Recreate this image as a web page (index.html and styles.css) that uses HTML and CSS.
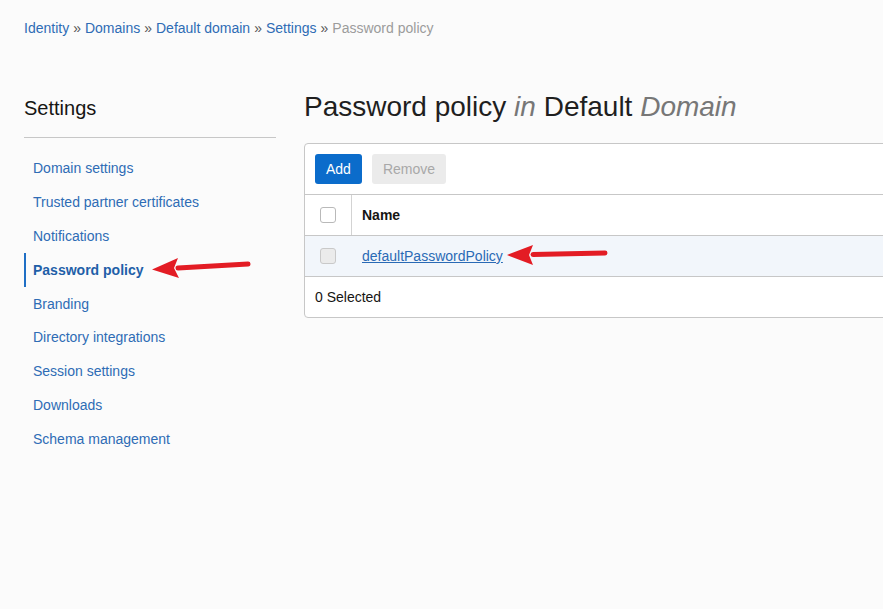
FILE: index.html
```html
<!DOCTYPE html>
<html>
<head>
<meta charset="utf-8">
<link rel="stylesheet" href="styles.css">
</head>
<body>
<div class="page">
  <nav class="crumbs">
    <a href="#">Identity</a><span class="sep">»</span><a href="#">Domains</a><span class="sep">»</span><a href="#">Default domain</a><span class="sep">»</span><a href="#">Settings</a><span class="sep">»</span><span class="current">Password policy</span>
  </nav>
  <div class="layout">
    <aside class="sidebar">
      <h2 class="side-title">Settings</h2>
      <ul class="side-nav">
        <li><a href="#">Domain settings</a></li>
        <li><a href="#">Trusted partner certificates</a></li>
        <li><a href="#">Notifications</a></li>
        <li class="active"><a href="#">Password policy</a></li>
        <li><a href="#">Branding</a></li>
        <li><a href="#">Directory integrations</a></li>
        <li><a href="#">Session settings</a></li>
        <li><a href="#">Downloads</a></li>
        <li><a href="#">Schema management</a></li>
      </ul>
    </aside>
    <main class="main">
      <h1 class="title">Password policy <em>in</em> Default <em>Domain</em></h1>
      <div class="card">
        <div class="toolbar">
          <button class="btn btn-primary">Add</button>
          <button class="btn btn-disabled">Remove</button>
        </div>
        <div class="row head">
          <div class="cell check"><span class="box"></span></div>
          <div class="cell name">Name</div>
        </div>
        <div class="row data">
          <div class="cell check"><span class="box dis"></span></div>
          <div class="cell name"><a href="#">defaultPasswordPolicy</a></div>
        </div>
        <div class="foot">0 Selected</div>
      </div>
    </main>
  </div>
  <svg class="arrow arrow-nav" width="110" height="24" viewBox="0 0 110 24">
    <path d="M100 10 L30 14" stroke="#e31c24" stroke-width="5" stroke-linecap="round" fill="none"/>
    <path d="M4 15.5 L30 4 L26 14 L31 24 Z" fill="#e31c24"/>
  </svg>
  <svg class="arrow arrow-row" width="110" height="24" viewBox="0 0 110 24">
    <path d="M102 11 L30 12.5" stroke="#e31c24" stroke-width="5" stroke-linecap="round" fill="none"/>
    <path d="M4 13 L30 3 L26 13 L30 23 Z" fill="#e31c24"/>
  </svg>
</div>
</body>
</html>
```

FILE: styles.css
```css
html, body {
  margin: 0;
  padding: 0;
  background: #fbfbfb;
  overflow: hidden;
}
body {
  font-family: "Liberation Sans", Arial, sans-serif;
  color: #161513;
}
.page {
  position: relative;
  width: 1100px;
  padding: 19px 0 0 24px;
}
a { color: #2e6cb5; text-decoration: none; }

.crumbs {
  font-size: 14px;
  line-height: 18px;
  height: 18px;
}
.crumbs .sep {
  color: #555;
  margin: 0 4px;
}
.crumbs .current { color: #9c9c9c; }

.layout {
  display: flex;
  margin-top: 55px;
}
.sidebar {
  width: 252px;
  flex: none;
}
.side-title {
  font-size: 20px;
  font-weight: normal;
  margin: 0;
  line-height: 32px;
  padding-bottom: 13px;
  border-bottom: 1px solid #c7c7c7;
}
.side-nav {
  list-style: none;
  margin: 13px 0 0;
  padding: 0;
}
.side-nav li {
  height: 33.9px;
  display: flex;
  align-items: center;
  padding-left: 9px;
  font-size: 14px;
  border-left: 2px solid transparent;
}
.side-nav li a { margin-left: -2px; }
.side-nav li.active {
  border-left-color: #1f6fc5;
}
.side-nav li.active a {
  font-weight: bold;
  color: #1f5fa8;
}

.main {
  margin-left: 28px;
  flex: 1;
}
.title {
  margin: -3px 0 0;
  font-size: 28px;
  font-weight: normal;
  line-height: 36px;
  color: #1f1f1f;
}
.title em { color: #777; }

.card {
  margin-top: 18px;
  border: 1px solid #c7c7c7;
  border-radius: 4px;
  background: #fff;
}
.toolbar {
  display: flex;
  gap: 10px;
  padding: 10px;
  border-bottom: 1px solid #c7c7c7;
}
.btn {
  font-family: inherit;
  font-size: 14px;
  height: 30px;
  border: none;
  border-radius: 3px;
  padding: 0 11px;
}
.btn-primary {
  background: #0b6ccb;
  color: #fff;
}
.btn-disabled {
  background: #ebebeb;
  color: #a8a8a8;
}
.row {
  display: flex;
  height: 40px;
  border-bottom: 1px solid #c7c7c7;
}
.row.data { background: #f2f6fb; }
.cell {
  display: flex;
  align-items: center;
}
.cell.check {
  width: 46px;
  justify-content: center;
}
.row.head .cell.check { border-right: 1px solid #d3d3d3; }
.row.data .cell.check { border-right: 1px solid transparent; }
.cell.name {
  padding-left: 10px;
  font-size: 14px;
}
.row.head .cell.name { font-weight: bold; }
.cell.name a {
  text-decoration: underline;
  color: #2a6ab5;
}
.box {
  width: 14px;
  height: 14px;
  border: 1px solid #b9b9b9;
  border-radius: 3px;
  background: #fff;
}
.box.dis {
  background: #ebebeb;
  border-color: #c9c9c9;
}
.foot {
  height: 40px;
  display: flex;
  align-items: center;
  padding-left: 10px;
  font-size: 14px;
}

.arrow { position: absolute; }
.arrow-nav { left: 148px; top: 254px; }
.arrow-row { left: 503px; top: 242px; }
```
